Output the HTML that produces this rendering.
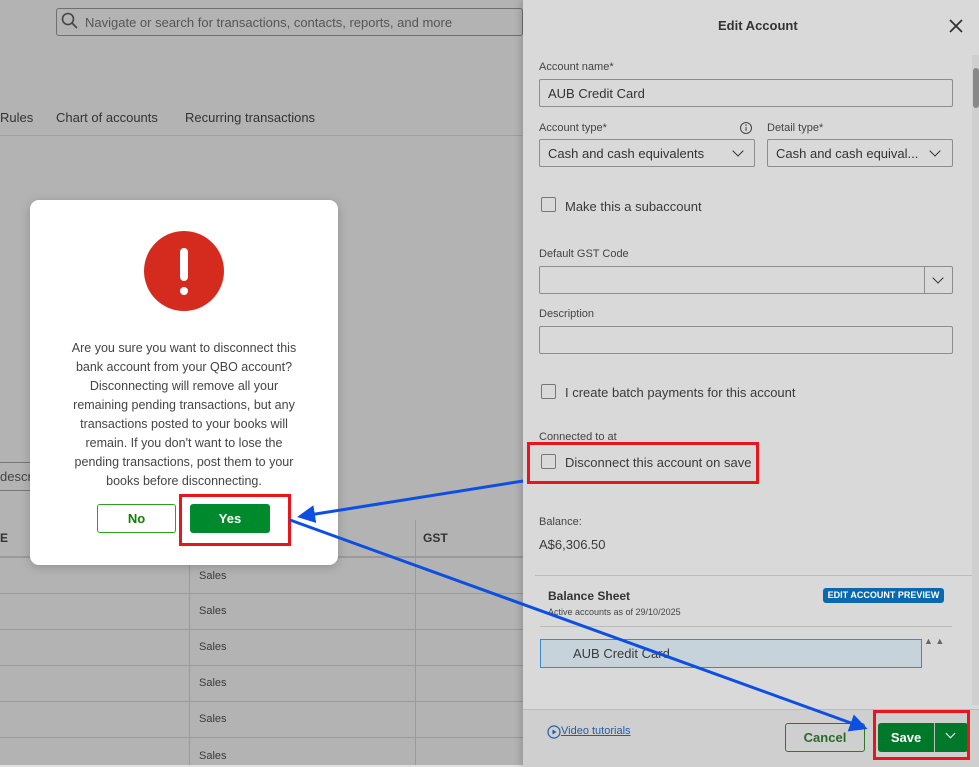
<!DOCTYPE html>
<html><head><style>
*{box-sizing:border-box;margin:0;padding:0}
body{width:979px;height:767px;overflow:hidden;background:#b3b3b3;font-family:"Liberation Sans",sans-serif;position:relative;color:#3a3a3a}
.a{position:absolute}
.lbl{font-size:11px;color:#444}
.inp{position:absolute;border:1px solid #8d8d8d;border-radius:2px;background:#d9d9d9;height:28px;font-size:13px;padding:6px 8px;color:#333}
.chk{position:absolute;width:15px;height:15px;border:1px solid #777;border-radius:2px;background:#d9d9d9}
.chev{position:absolute;width:8px;height:8px;border-right:1.5px solid #333;border-bottom:1.5px solid #333;transform:rotate(45deg)}
</style></head><body>
<div class="a" style="left:56px;top:8px;width:467px;height:28px;border:1px solid #6f6f6f;border-radius:3px"></div>
<svg class="a" style="left:61px;top:12px" width="18" height="18"><circle cx="7" cy="7" r="5.5" fill="none" stroke="#444" stroke-width="1.6"/><line x1="11" y1="11" x2="16" y2="16" stroke="#444" stroke-width="1.6"/></svg>
<div class="a" style="left:85px;top:15px;font-size:13px;color:#555">Navigate or search for transactions, contacts, reports, and more</div>
<div class="a" style="left:0;top:110px;font-size:13px;color:#333">Rules</div>
<div class="a" style="left:56px;top:110px;font-size:13px;color:#333">Chart of accounts</div>
<div class="a" style="left:185px;top:110px;font-size:13px;color:#333">Recurring transactions</div>
<div class="a" style="left:0;top:135px;width:523px;height:1px;background:#a0a0a0"></div>
<div class="a" style="left:0;top:462px;width:35px;height:29px;border:1px solid #777;border-left:none"></div>
<div class="a" style="left:0;top:469px;font-size:13px;color:#444">descri</div>
<div class="a" style="left:0;top:531px;font-size:12px;font-weight:bold;color:#333">E</div>
<div class="a" style="left:423px;top:531px;font-size:12px;font-weight:bold;color:#333">GST</div>
<div class="a" style="left:0;top:556px;width:523px;height:2px;background:#9a9a9a"></div>
<div class="a" style="left:189px;top:520px;width:1px;height:247px;background:#9a9a9a"></div>
<div class="a" style="left:415px;top:520px;width:1px;height:247px;background:#9a9a9a"></div>
<div class="a" style="left:0;top:593px;width:523px;height:1px;background:#9a9a9a"></div>
<div class="a" style="left:0;top:629px;width:523px;height:1px;background:#9a9a9a"></div>
<div class="a" style="left:0;top:665px;width:523px;height:1px;background:#9a9a9a"></div>
<div class="a" style="left:0;top:701px;width:523px;height:1px;background:#9a9a9a"></div>
<div class="a" style="left:0;top:737px;width:523px;height:1px;background:#9a9a9a"></div>
<div class="a" style="left:199px;top:570px;font-size:11px">Sales</div>
<div class="a" style="left:199px;top:605px;font-size:11px">Sales</div>
<div class="a" style="left:199px;top:641px;font-size:11px">Sales</div>
<div class="a" style="left:199px;top:677px;font-size:11px">Sales</div>
<div class="a" style="left:199px;top:713px;font-size:11px">Sales</div>
<div class="a" style="left:199px;top:750px;font-size:11px">Sales</div>
<div class="a" style="left:0;top:765px;width:523px;height:2px;background:#e0e0e0"></div>

<div class="a" style="left:30px;top:200px;width:308px;height:365px;background:#fff;border-radius:9px;box-shadow:0 2px 10px rgba(0,0,0,.2)"></div>
<div class="a" style="left:144px;top:231px;width:80px;height:80px;border-radius:50%;background:#d52b1e"></div>
<div class="a" style="left:180px;top:248px;width:8px;height:33px;background:#fff;border-radius:4px"></div>
<div class="a" style="left:180px;top:287px;width:8px;height:8px;background:#fff;border-radius:50%"></div>
<div class="a" style="left:62px;top:339px;width:244px;text-align:center;font-size:12.5px;line-height:19px;color:#444">Are you sure you want to disconnect this bank account from your QBO account? Disconnecting will remove all your remaining pending transactions, but any transactions posted to your books will remain. If you don't want to lose the pending transactions, post them to your books before disconnecting.</div>
<div class="a" style="left:97px;top:504px;width:79px;height:29px;border:1px solid #2ca01c;border-radius:3px;color:#108000;font-weight:bold;font-size:13px;text-align:center;line-height:27px">No</div>
<div class="a" style="left:190px;top:504px;width:80px;height:29px;background:#008a2e;border-radius:3px;color:#fff;font-weight:bold;font-size:13px;text-align:center;line-height:29px">Yes</div>
<div class="a" style="left:179px;top:494px;width:112px;height:52px;border:3px solid #e8161b"></div>

<div class="a" style="left:523px;top:0;width:456px;height:767px;background:#d9d9d9;box-shadow:-3px 0 6px rgba(0,0,0,.15)"></div>
<div class="a" style="left:718px;top:18px;font-size:13px;font-weight:bold;color:#333">Edit Account</div>
<svg class="a" style="left:948px;top:18px" width="16" height="16"><path d="M2 2L14 14M14 2L2 14" stroke="#333" stroke-width="1.8"/></svg>
<div class="a" style="left:972px;top:55px;width:7px;height:650px;background:#cfcfcf"></div>
<div class="a" style="left:973px;top:68px;width:6px;height:40px;background:#888;border-radius:3px"></div>
<div class="a lbl" style="left:539px;top:61px">Account name*</div>
<div class="inp" style="left:539px;top:79px;width:414px">AUB Credit Card</div>
<div class="a lbl" style="left:539px;top:122px">Account type*</div>
<svg class="a" style="left:739px;top:121px" width="14" height="14"><circle cx="7" cy="7" r="5.5" fill="none" stroke="#444"/><line x1="7" y1="6" x2="7" y2="10" stroke="#444"/><circle cx="7" cy="4" r=".8" fill="#444"/></svg>
<div class="a lbl" style="left:767px;top:122px">Detail type*</div>
<div class="inp" style="left:539px;top:139px;width:216px">Cash and cash equivalents</div>
<div class="chev" style="left:734px;top:147px"></div>
<div class="inp" style="left:767px;top:139px;width:186px">Cash and cash equival...</div>
<div class="chev" style="left:931px;top:147px"></div>
<div class="chk" style="left:541px;top:197px"></div>
<div class="a" style="left:565px;top:199px;font-size:13px">Make this a subaccount</div>
<div class="a lbl" style="left:539px;top:248px">Default GST Code</div>
<div class="inp" style="left:539px;top:266px;width:414px"></div>
<div class="a" style="left:924px;top:266px;width:1px;height:28px;background:#8d8d8d"></div>
<div class="chev" style="left:934px;top:274px"></div>
<div class="a lbl" style="left:539px;top:308px">Description</div>
<div class="inp" style="left:539px;top:326px;width:414px"></div>
<div class="chk" style="left:541px;top:384px"></div>
<div class="a" style="left:565px;top:385px;font-size:13px">I create batch payments for this account</div>
<div class="a lbl" style="left:539px;top:431px">Connected to at</div>
<div class="chk" style="left:541px;top:454px"></div>
<div class="a" style="left:565px;top:455px;font-size:13px">Disconnect this account on save</div>
<div class="a" style="left:527px;top:442px;width:232px;height:42px;border:3px solid #e8161b"></div>
<div class="a lbl" style="left:539px;top:516px">Balance:</div>
<div class="a" style="left:539px;top:537px;font-size:13px">A$6,306.50</div>
<div class="a" style="left:535px;top:575px;width:437px;height:1px;background:#bbb"></div>
<div class="a" style="left:548px;top:589px;font-size:12px;font-weight:bold;color:#333">Balance Sheet</div>
<div class="a" style="left:548px;top:607px;font-size:9px;color:#444">Active accounts as of 29/10/2025</div>
<div class="a" style="left:823px;top:588px;width:121px;height:15px;background:#0969b0;border-radius:3px;color:#fff;font-size:9px;font-weight:bold;text-align:center;line-height:15px">EDIT ACCOUNT PREVIEW</div>
<div class="a" style="left:540px;top:626px;width:412px;height:1px;background:#bbb"></div>
<div class="a" style="left:540px;top:639px;width:382px;height:29px;background:#c7d3db;border:1px solid #3a8ac4"></div>
<div class="a" style="left:573px;top:646px;font-size:13px">AUB Credit Card</div>
<div class="a" style="left:924px;top:636px;font-size:9px;color:#666">▲ ▲</div>
<div class="a" style="left:523px;top:709px;width:456px;height:58px;background:#cfcfcf;border-top:1px solid #bbb"></div>
<svg class="a" style="left:547px;top:725px" width="14" height="14"><circle cx="7" cy="7" r="6" fill="none" stroke="#1f5ea8" stroke-width="1.2"/><path d="M5.5 4.5L9.5 7L5.5 9.5Z" fill="#1f5ea8"/></svg>
<div class="a" style="left:561px;top:725px;font-size:11px;color:#1f5ea8;text-decoration:underline">Video tutorials</div>
<div class="a" style="left:785px;top:723px;width:80px;height:29px;border:1px solid #2a7a2a;border-radius:3px;color:#2a6a2a;font-weight:bold;font-size:13px;text-align:center;line-height:27px">Cancel</div>
<div class="a" style="left:878px;top:723px;width:90px;height:29px;background:#00782a;border-radius:3px"></div>
<div class="a" style="left:878px;top:730px;width:56px;text-align:center;color:#fff;font-weight:bold;font-size:13px">Save</div>
<div class="a" style="left:934px;top:723px;width:1px;height:29px;background:#bfbfbf"></div>
<div class="a" style="left:947px;top:730px;width:7px;height:7px;border-right:1.5px solid #fff;border-bottom:1.5px solid #fff;transform:rotate(45deg)"></div>
<div class="a" style="left:873px;top:710px;width:97px;height:50px;border:3px solid #e8161b"></div>

<svg class="a" style="left:0;top:0" width="979" height="767">
<defs><marker id="m" markerWidth="6" markerHeight="6" refX="4" refY="3" orient="auto"><path d="M0 0L6 3L0 6Z" fill="#0d4fe0"/></marker></defs>
<line x1="523" y1="481" x2="303" y2="516" stroke="#0d4fe0" stroke-width="3" marker-end="url(#m)"/>
<line x1="290" y1="520" x2="862" y2="727" stroke="#0d4fe0" stroke-width="3" marker-end="url(#m)"/>
</svg>
</body></html>
